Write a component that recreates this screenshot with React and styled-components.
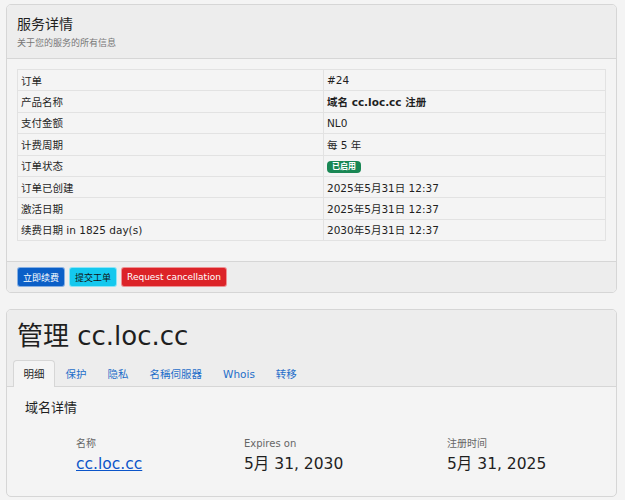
import React from 'react';
import styled, { createGlobalStyle } from 'styled-components';

const GlobalStyle = createGlobalStyle`
  body {
    margin: 0;
    background: #f4f4f4;
    font-family: "DejaVu Sans", "Noto Sans CJK SC", sans-serif;
    color: #1f1f1f;
  }
`;

const Page = styled.div`
  padding: 4px 8px 8px 6px;
  display: flex;
  flex-direction: column;
  gap: 16px;
`;

const Card = styled.div`
  border: 1px solid #d6d6d6;
  border-radius: 5px;
  background: #f4f4f4;
  overflow: hidden;
`;

const CardHeader = styled.div`
  background: #ededed;
  border-bottom: 1px solid #d6d6d6;
  padding: 10px;
  height: 33px;
`;

const HeaderTitle = styled.h3`
  margin: 0;
  font-size: 14px;
  font-weight: normal;
  line-height: 18px;
`;

const HeaderSub = styled.div`
  margin-top: 4px;
  font-size: 9px;
  line-height: 12px;
  color: #777;
`;

const CardBody = styled.div`
  padding: 10px 10px 20px 10px;
`;

const Table = styled.table`
  width: 100%;
  border-collapse: collapse;
  font-size: 10.5px;
  border: 1px solid #e2e2e2;
`;

const Cell = styled.td`
  border: 1px solid #e2e2e2;
  height: 20.4px;
  padding: 0 3px;
  width: ${p => (p.$key ? '299px' : 'auto')};
  font-weight: ${p => (p.$bold ? 'bold' : 'normal')};
`;

const Badge = styled.span`
  display: inline-block;
  background: #198754;
  color: #fff;
  font-size: 8px;
  font-weight: bold;
  padding: 1px 5px;
  border-radius: 4px;
  line-height: 10px;
`;

const CardFooter = styled.div`
  background: #ededed;
  border-top: 1px solid #d6d6d6;
  padding: 5px 10px 5px 10px;
  display: flex;
  gap: 4px;
`;

const Button = styled.button`
  font-family: inherit;
  font-size: 9px;
  height: 20px;
  padding: 0 5px;
  border: 1px solid rgba(255, 255, 255, 0.5);
  border-radius: 3px;
  background: ${p => p.$bg};
  color: ${p => p.$fg};
`;

const TitleArea = styled.div`
  background: #ededed;
`;

const BigTitle = styled.h1`
  margin: 0;
  font-size: 26px;
  font-weight: normal;
  line-height: 32px;
  padding: 10px 10px 8px;
`;

const Tabs = styled.div`
  display: flex;
  padding-left: 6px;
  border-bottom: 1px solid #d6d6d6;
`;

const Tab = styled.div`
  font-size: 10.5px;
  padding: 0 9.5px;
  height: 26px;
  line-height: 26px;
  color: ${p => (p.$active ? '#1f1f1f' : '#1e6ec9')};
  background: ${p => (p.$active ? '#f4f4f4' : 'transparent')};
  border: 1px solid ${p => (p.$active ? '#d6d6d6' : 'transparent')};
  border-bottom: none;
  border-radius: 4px 4px 0 0;
  margin-bottom: -1px;
`;

const Section = styled.div`
  padding: 12px 18px 22px;
`;

const SectionTitle = styled.h4`
  margin: 0;
  font-size: 13px;
  line-height: 18px;
  font-weight: normal;
`;

const InfoGrid = styled.div`
  display: grid;
  grid-template-columns: 168px 203px auto;
  padding: 20px 0 0 51px;
`;

const Label = styled.div`
  font-size: 10px;
  line-height: 14px;
  color: #666;
  margin-bottom: 3px;
`;

const Value = styled.div`
  font-size: 15.5px;
  line-height: 20px;
`;

const Link = styled.a`
  color: #0b54c9;
  text-decoration: underline;
`;

const rows = [
  ['订单', '#24'],
  ['产品名称', '域名 cc.loc.cc 注册', true],
  ['支付金额', 'NL0'],
  ['计费周期', '每 5 年'],
  ['订单状态', 'badge'],
  ['订单已创建', '2025年5月31日 12:37'],
  ['激活日期', '2025年5月31日 12:37'],
  ['续费日期 in 1825 day(s)', '2030年5月31日 12:37'],
];

const tabs = ['明细', '保护', '隐私', '名稱伺服器', 'Whois', '转移'];

export default function App() {
  return (
    <>
      <GlobalStyle />
      <Page>
        <Card>
          <CardHeader>
            <HeaderTitle>服务详情</HeaderTitle>
            <HeaderSub>关于您的服务的所有信息</HeaderSub>
          </CardHeader>
          <CardBody>
            <Table>
              <tbody>
                {rows.map(([k, v, bold]) => (
                  <tr key={k}>
                    <Cell $key>{k}</Cell>
                    <Cell $bold={bold}>
                      {v === 'badge' ? <Badge>已启用</Badge> : v}
                    </Cell>
                  </tr>
                ))}
              </tbody>
            </Table>
          </CardBody>
          <CardFooter>
            <Button $bg="#0b5fc7" $fg="#fff">立即续费</Button>
            <Button $bg="#14c8ee" $fg="#111">提交工单</Button>
            <Button $bg="#dc2328" $fg="#fff">Request cancellation</Button>
          </CardFooter>
        </Card>
        <Card>
          <TitleArea>
            <BigTitle>管理 cc.loc.cc</BigTitle>
            <Tabs>
              {tabs.map((t, i) => (
                <Tab key={t} $active={i === 0}>{t}</Tab>
              ))}
            </Tabs>
          </TitleArea>
          <Section>
            <SectionTitle>域名详情</SectionTitle>
            <InfoGrid>
              <div>
                <Label>名称</Label>
                <Value><Link href="#">cc.loc.cc</Link></Value>
              </div>
              <div>
                <Label>Expires on</Label>
                <Value>5月 31, 2030</Value>
              </div>
              <div>
                <Label>注册时间</Label>
                <Value>5月 31, 2025</Value>
              </div>
            </InfoGrid>
          </Section>
        </Card>
      </Page>
    </>
  );
}
